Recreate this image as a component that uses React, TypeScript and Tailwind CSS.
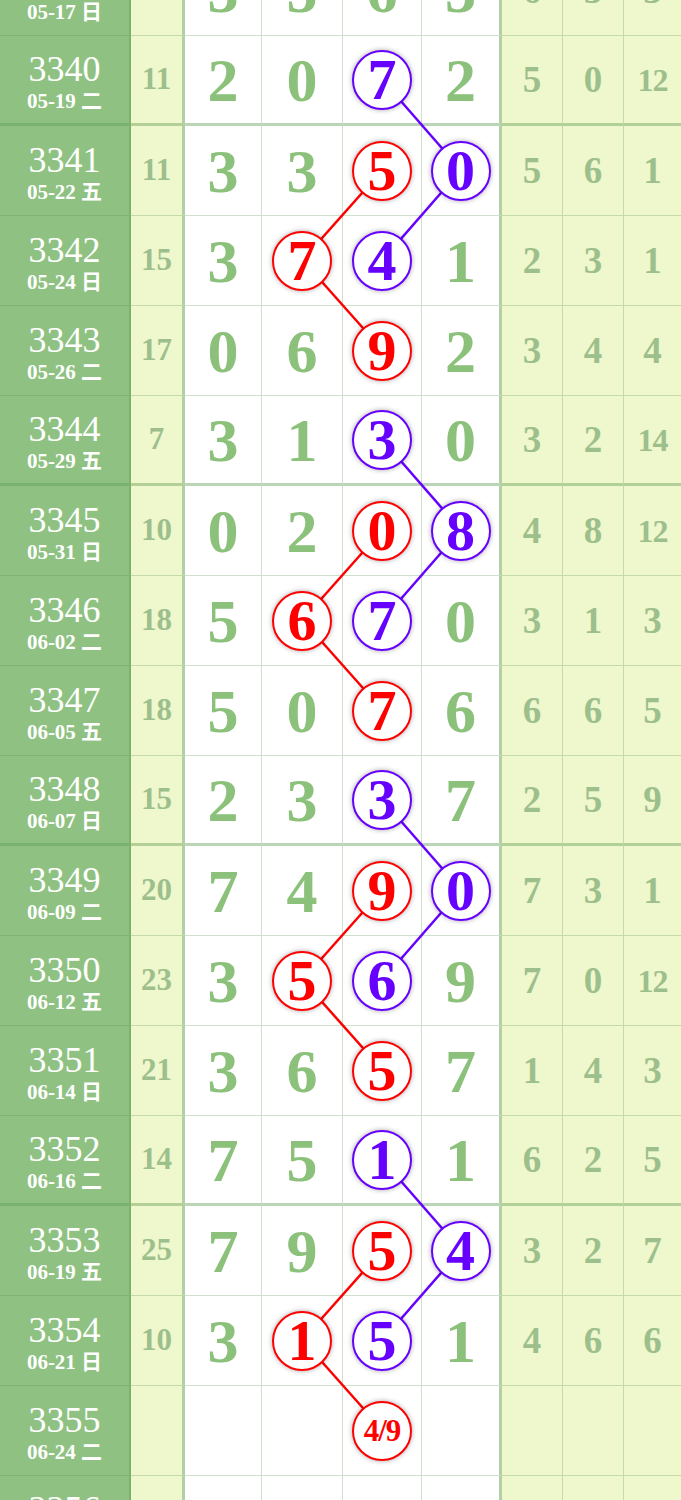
import React from "react";

type Mark = "r" | "p";
type Cell = { v: string; c?: Mark };
type Row = {
  no: string;
  date: string;
  sum: string;
  big: Cell[];
  tail: string[];
};

const n = (v: string, c?: Mark): Cell => ({ v, c });

const rows: Row[] = [
  { no: "3339", date: "05-17 日", sum: "16", big: [n("3"), n("5"), n("6"), n("3")], tail: ["6", "3", "3"] },
  { no: "3340", date: "05-19 二", sum: "11", big: [n("2"), n("0"), n("7", "p"), n("2")], tail: ["5", "0", "12"] },
  { no: "3341", date: "05-22 五", sum: "11", big: [n("3"), n("3"), n("5", "r"), n("0", "p")], tail: ["5", "6", "1"] },
  { no: "3342", date: "05-24 日", sum: "15", big: [n("3"), n("7", "r"), n("4", "p"), n("1")], tail: ["2", "3", "1"] },
  { no: "3343", date: "05-26 二", sum: "17", big: [n("0"), n("6"), n("9", "r"), n("2")], tail: ["3", "4", "4"] },
  { no: "3344", date: "05-29 五", sum: "7", big: [n("3"), n("1"), n("3", "p"), n("0")], tail: ["3", "2", "14"] },
  { no: "3345", date: "05-31 日", sum: "10", big: [n("0"), n("2"), n("0", "r"), n("8", "p")], tail: ["4", "8", "12"] },
  { no: "3346", date: "06-02 二", sum: "18", big: [n("5"), n("6", "r"), n("7", "p"), n("0")], tail: ["3", "1", "3"] },
  { no: "3347", date: "06-05 五", sum: "18", big: [n("5"), n("0"), n("7", "r"), n("6")], tail: ["6", "6", "5"] },
  { no: "3348", date: "06-07 日", sum: "15", big: [n("2"), n("3"), n("3", "p"), n("7")], tail: ["2", "5", "9"] },
  { no: "3349", date: "06-09 二", sum: "20", big: [n("7"), n("4"), n("9", "r"), n("0", "p")], tail: ["7", "3", "1"] },
  { no: "3350", date: "06-12 五", sum: "23", big: [n("3"), n("5", "r"), n("6", "p"), n("9")], tail: ["7", "0", "12"] },
  { no: "3351", date: "06-14 日", sum: "21", big: [n("3"), n("6"), n("5", "r"), n("7")], tail: ["1", "4", "3"] },
  { no: "3352", date: "06-16 二", sum: "14", big: [n("7"), n("5"), n("1", "p"), n("1")], tail: ["6", "2", "5"] },
  { no: "3353", date: "06-19 五", sum: "25", big: [n("7"), n("9"), n("5", "r"), n("4", "p")], tail: ["3", "2", "7"] },
  { no: "3354", date: "06-21 日", sum: "10", big: [n("3"), n("1", "r"), n("5", "p"), n("1")], tail: ["4", "6", "6"] },
  { no: "3355", date: "06-24 二", sum: "", big: [n(""), n(""), n("4/9", "r"), n("")], tail: ["", "", ""] },
  { no: "3356", date: "06-26 五", sum: "", big: [n(""), n(""), n(""), n("")], tail: ["", "", ""] },
];

// centre x of the four white columns
const colX = [223.5, 302.5, 382.5, 461];
const ROW_H = 90;

const colors: Record<Mark, string> = { r: "#ff0000", p: "#6600ff" };

function links() {
  const out: { x1: number; y1: number; x2: number; y2: number; c: Mark }[] = [];
  rows.forEach((row, i) => {
    const next = rows[i + 1];
    if (!next) return;
    row.big.forEach((cell, a) => {
      if (!cell.c) return;
      next.big.forEach((other, b) => {
        if (other.c === cell.c) {
          out.push({
            x1: colX[a],
            y1: i * ROW_H + 44,
            x2: colX[b],
            y2: (i + 1) * ROW_H + 44,
            c: cell.c,
          });
        }
      });
    });
  });
  return out;
}

function Ball({ v, c }: { v: string; c: Mark }) {
  const tone =
    c === "r"
      ? "border-[#ff0000] text-[#ff0000]"
      : "border-[#6600ff] text-[#6600ff]";
  const size = v.length > 1 ? "text-[31px] tracking-[-1px]" : "text-[58px]";
  return (
    <div
      className={`relative z-[2] flex h-[60px] w-[60px] items-center justify-center rounded-full border-2 bg-white font-bold leading-none shadow-[0_0_5px_rgba(0,0,0,0.35)] ${tone} ${size}`}
    >
      {v}
    </div>
  );
}

function DrawRow({ row }: { row: Row }) {
  const thick = (parseInt(row.no, 10) - 3340) % 4 === 0;
  const edge = thick
    ? "border-b-[3px] border-b-[rgba(96,156,84,0.42)]"
    : "border-b border-b-[rgba(96,156,84,0.3)]";
  const widths = ["w-[77px]", "w-[81px]", "w-[79px]", "w-[80px]"];
  const tailW = ["w-[61px]", "w-[61px]", "w-[57px]"];

  return (
    <div className="flex h-[90px]">
      <div
        className={`flex w-[131px] shrink-0 flex-col items-center justify-center border-r-2 border-r-[#7daf6f] bg-[#8fc282] pt-[4px] text-white ${edge}`}
      >
        <div className="text-[36px] leading-[36px]">{row.no}</div>
        <div className="mt-[3px] text-[21px] font-bold leading-[22px]">
          {row.date}
        </div>
      </div>
      <div
        className={`flex w-[54px] shrink-0 items-center justify-center border-r-[3px] border-r-[#b3cfa6] bg-[#eff7cc] text-[31px] font-bold text-[#9dbf8c] ${edge}`}
      >
        {row.sum}
      </div>
      {row.big.map((cell, i) => (
        <div
          key={i}
          className={`flex shrink-0 items-center justify-center bg-white ${widths[i]} ${
            i === 3
              ? "border-r-[3px] border-r-[#b3cfa6]"
              : "border-r border-r-[rgba(96,156,84,0.3)]"
          } ${edge}`}
        >
          {cell.c ? (
            <Ball v={cell.v} c={cell.c} />
          ) : (
            <span className="text-[62px] font-bold leading-none text-[#8bc17a]">
              {cell.v}
            </span>
          )}
        </div>
      ))}
      {row.tail.map((v, i) => (
        <div
          key={i}
          className={`flex shrink-0 items-center justify-center bg-[#eff7cc] font-bold text-[#9dbf8c] ${tailW[i]} ${
            i < 2 ? "border-r border-r-[rgba(96,156,84,0.3)]" : ""
          } ${v.length > 1 ? "text-[32px] tracking-[-1px]" : "text-[37px]"} ${edge}`}
        >
          {v}
        </div>
      ))}
    </div>
  );
}

export default function App() {
  const lines = links();
  return (
    <div className="h-[1500px] w-[681px] overflow-hidden bg-white font-['Liberation_Serif','Noto_Sans_CJK_SC',serif]">
      <div className="relative -mt-[54px]">
        {rows.map((row) => (
          <DrawRow key={row.no} row={row} />
        ))}
        <svg
          className="pointer-events-none absolute inset-0 z-[1]"
          width={681}
          height={rows.length * ROW_H}
        >
          {lines.map((l, i) => (
            <line
              key={i}
              x1={l.x1}
              y1={l.y1}
              x2={l.x2}
              y2={l.y2}
              stroke={colors[l.c]}
              strokeWidth={2.5}
            />
          ))}
        </svg>
      </div>
    </div>
  );
}
